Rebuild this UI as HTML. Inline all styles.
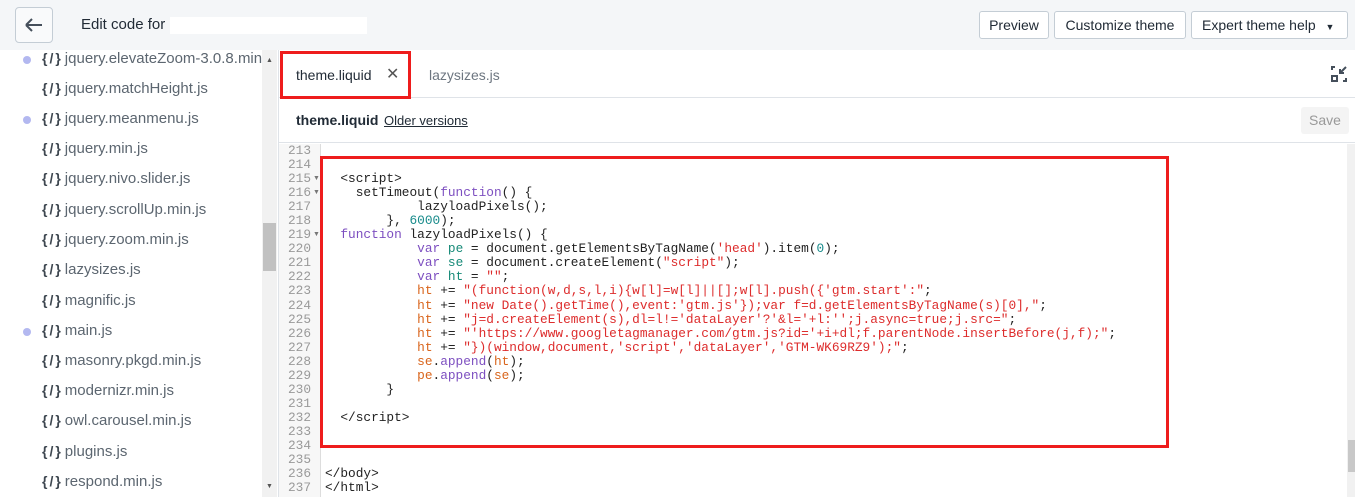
<!DOCTYPE html>
<html><head><meta charset="utf-8"><style>
*{margin:0;padding:0;box-sizing:border-box}
body{width:1355px;height:497px;overflow:hidden;background:#fff;font-family:"Liberation Sans",sans-serif;position:relative;color:#212b36}
.hdr{position:absolute;left:0;top:0;width:1355px;height:50px;background:#f4f6f8}
.back{position:absolute;left:15px;top:7px;width:38px;height:36px;border:1px solid #c4cdd5;border-radius:4px;background:#f9fafb}
.title{position:absolute;left:81px;top:16px;font-size:15px;color:#212b36}
.blank{position:absolute;left:170px;top:17px;width:197px;height:17px;background:#fff}
.btn{position:absolute;top:11px;height:28px;border:1px solid #c4cdd5;border-radius:3px;background:#fff;font-size:14px;line-height:26px;text-align:center;color:#212b36}
.side{position:absolute;left:0;top:50px;width:262px;height:447px;overflow:hidden}
.item{position:absolute;left:42px;font-size:15px;color:#5c6670;white-space:nowrap}
.item b{font-weight:bold;color:#3e4750;font-size:14px;letter-spacing:2px;margin-right:2px}
.dot{position:absolute;left:23px;width:8px;height:8px;border-radius:50%;background:#b3b8f0}
.sb{position:absolute;left:262px;top:50px;width:15px;height:447px;background:#f1f1f1}
.main{position:absolute;left:278px;top:50px;width:1077px;height:447px;border-left:1px solid #dfe3e8}
.tabs{position:absolute;left:0;top:0;width:1077px;height:48px;border-bottom:1px solid #dfe3e8}
.sub{position:absolute;left:0;top:49px;width:1077px;height:44px;border-bottom:1px solid #dfe3e8}
.gut{position:absolute;left:0;top:94px;width:42px;height:353px;background:#f7f7f7;border-right:1px solid #ddd}
.ln{position:absolute;left:9px;font-family:"Liberation Mono",monospace;font-size:12.8px;color:#999;line-height:14.04px}
.code{position:absolute;left:46px;top:94px;font-family:"Liberation Mono",monospace;font-size:12.8px;line-height:14.04px;white-space:pre;color:#222}
.k{color:#7d4fc0}.s{color:#dd2c2c}.n{color:#168a8a}.v{color:#178a78}.o{color:#d9651c}
.red{position:absolute;border:3px solid #ee1c1c}
</style></head><body>
<div class="hdr">
<div class="back"><svg width="36" height="34" viewBox="0 0 36 34"><path d="M10 17H26M10 17l6-6M10 17l6 6" stroke="#454f5b" stroke-width="2" fill="none"/></svg></div>
<div class="title">Edit code for</div><div class="blank"></div>
<div class="btn" style="left:979px;width:70px">Preview</div>
<div class="btn" style="left:1054px;width:132px">Customize theme</div>
<div class="btn" style="left:1191px;width:157px;text-align:left;padding-left:10px">Expert theme help <span style="font-size:9px;margin-left:6px">▼</span></div>
</div>
<div class="side">
<div class="dot" style="top:6px"></div><div class="item" style="top:0px"><b>{/}</b>jquery.elevateZoom-3.0.8.min</div>
<div class="item" style="top:30px"><b>{/}</b>jquery.matchHeight.js</div>
<div class="dot" style="top:66px"></div><div class="item" style="top:60px"><b>{/}</b>jquery.meanmenu.js</div>
<div class="item" style="top:90px"><b>{/}</b>jquery.min.js</div>
<div class="item" style="top:120px"><b>{/}</b>jquery.nivo.slider.js</div>
<div class="item" style="top:151px"><b>{/}</b>jquery.scrollUp.min.js</div>
<div class="item" style="top:181px"><b>{/}</b>jquery.zoom.min.js</div>
<div class="item" style="top:211px"><b>{/}</b>lazysizes.js</div>
<div class="item" style="top:242px"><b>{/}</b>magnific.js</div>
<div class="dot" style="top:278px"></div><div class="item" style="top:272px"><b>{/}</b>main.js</div>
<div class="item" style="top:302px"><b>{/}</b>masonry.pkgd.min.js</div>
<div class="item" style="top:332px"><b>{/}</b>modernizr.min.js</div>
<div class="item" style="top:362px"><b>{/}</b>owl.carousel.min.js</div>
<div class="item" style="top:393px"><b>{/}</b>plugins.js</div>
<div class="item" style="top:423px"><b>{/}</b>respond.min.js</div>
</div>
<div class="sb"><div style="position:absolute;left:4px;top:7px;font-size:7px;color:#555">▲</div><div style="position:absolute;left:1px;top:173px;width:13px;height:48px;background:#c1c1c1"></div><div style="position:absolute;left:4px;top:433px;font-size:7px;color:#555">▼</div></div>
<div class="main">
<div class="tabs">
<div style="position:absolute;left:17px;top:17px;font-size:14px">theme.liquid</div>
<div style="position:absolute;left:107px;top:14px;font-size:16px;color:#555">✕</div>
<div style="position:absolute;left:150px;top:17px;font-size:14px;color:#6d7680">lazysizes.js</div>
<svg style="position:absolute;left:1052px;top:16px" width="16" height="16" viewBox="0 0 16 16"><path d="M1 4V1h3M12 15h3v-3M1 10h5v5H1zM15 1L9 7M9 3v4h4" stroke="#454f5b" stroke-width="2" fill="none"/></svg>
</div>
<div class="sub">
<div style="position:absolute;left:17px;top:13px;font-size:14px;font-weight:bold">theme.liquid</div>
<div style="position:absolute;left:105px;top:14px;font-size:13px;text-decoration:underline">Older versions</div>
<div style="position:absolute;left:1022px;top:8px;width:48px;height:27px;background:#f4f4f4;border-radius:3px;font-size:14px;color:#999;text-align:center;line-height:27px">Save</div>
</div>
<div class="gut">
<div class="ln" style="top:0">213<br>214<br>215<br>216<br>217<br>218<br>219<br>220<br>221<br>222<br>223<br>224<br>225<br>226<br>227<br>228<br>229<br>230<br>231<br>232<br>233<br>234<br>235<br>236<br>237</div>
<div style="position:absolute;left:34px;top:28px;font-size:7px;color:#777;line-height:14.04px">▼<br>▼<br><br><br>▼</div>
</div>
<div class="code">

  &lt;script&gt;
    setTimeout(<span class="k">function</span>() {
            lazyloadPixels();
        }, <span class="n">6000</span>);
  <span class="k">function</span> lazyloadPixels() {
            <span class="k">var</span> <span class="v">pe</span> = document.getElementsByTagName(<span class="s">'head'</span>).item(<span class="n">0</span>);
            <span class="k">var</span> <span class="v">se</span> = document.createElement(<span class="s">"script"</span>);
            <span class="k">var</span> <span class="v">ht</span> = <span class="s">""</span>;
            <span class="o">ht</span> += <span class="s">"(function(w,d,s,l,i){w[l]=w[l]||[];w[l].push({'gtm.start':"</span>;
            <span class="o">ht</span> += <span class="s">"new Date().getTime(),event:'gtm.js'});var f=d.getElementsByTagName(s)[0],"</span>;
            <span class="o">ht</span> += <span class="s">"j=d.createElement(s),dl=l!='dataLayer'?'&amp;l='+l:'';j.async=true;j.src="</span>;
            <span class="o">ht</span> += <span class="s">"'https://www.googletagmanager.com/gtm.js?id='+i+dl;f.parentNode.insertBefore(j,f);"</span>;
            <span class="o">ht</span> += <span class="s">"})(window,document,'script','dataLayer','GTM-WK69RZ9');"</span>;
            <span class="o">se</span>.<span class="k">append</span>(<span class="o">ht</span>);
            <span class="o">pe</span>.<span class="k">append</span>(<span class="o">se</span>);
        }

  &lt;/script&gt;



&lt;/body&gt;
&lt;/html&gt;</div>
<div style="position:absolute;left:1068px;top:94px;width:9px;height:353px;background:#f1f1f1"><div style="position:absolute;left:1px;top:296px;width:7px;height:32px;background:#c8c8c8"></div></div>
</div>
<div class="red" style="left:280px;top:51px;width:131px;height:48px"></div>
<div class="red" style="left:320px;top:156px;width:849px;height:292px"></div>
</body></html>
